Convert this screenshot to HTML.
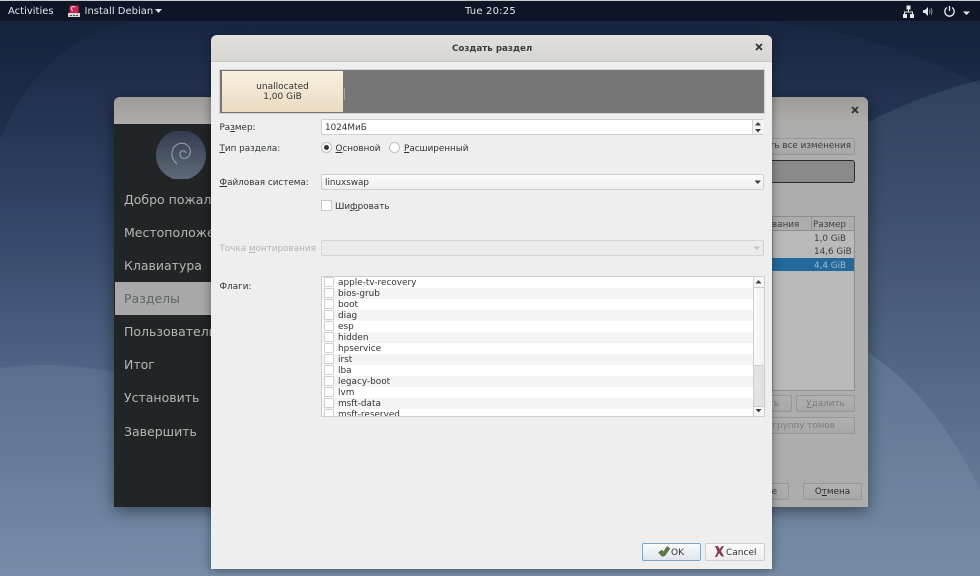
<!DOCTYPE html>
<html><head><meta charset="utf-8">
<style>
html,body{margin:0;padding:0;width:980px;height:576px;overflow:hidden;background:#2a3c5a}
#w{position:absolute;left:0;top:0;width:980px;height:576px;overflow:hidden;filter:blur(.35px);font-family:"DejaVu Sans","Liberation Sans",sans-serif;font-size:8.8px;color:#2e3436}
.a{position:absolute}
.t{position:absolute;white-space:nowrap;line-height:12px}
u{text-decoration-thickness:1px;text-underline-offset:1px}
.btn{position:absolute;box-sizing:border-box;border:1px solid #969696;border-radius:2px;background:linear-gradient(#b0b0b0,#a8a8a8);color:#7c7c7c;text-align:center;white-space:nowrap;overflow:hidden}
.s{position:absolute;left:121px;font-size:12.5px;line-height:16px;color:#b4b6b6;white-space:nowrap;width:90px;overflow:hidden;padding-left:3px;box-sizing:border-box}
.row{position:absolute;left:322px;width:431px;height:11px;overflow:hidden}
.row i{position:absolute;left:2px;top:0;width:8px;height:8px;border:1px solid #d0d0d0;background:#fff;border-radius:1px}
.row span{position:absolute;left:16px;top:0;line-height:12px;font-size:8.9px;color:#333}
</style></head><body><div id="w">
<svg class="a" style="left:0;top:0" width="980" height="576">
<defs>
<linearGradient id="bg" x1="0" y1="0" x2="0" y2="1"><stop offset="0" stop-color="#15223d"/><stop offset=".35" stop-color="#2f4263"/><stop offset=".7" stop-color="#566c8c"/><stop offset="1" stop-color="#7c92ad"/></linearGradient>
<linearGradient id="disc" x1="0" y1="0" x2="0" y2="1"><stop offset="0" stop-color="#323c4e"/><stop offset="1" stop-color="#5f6a7b"/></linearGradient>
</defs>
<rect width="980" height="576" fill="url(#bg)"/>
<path d="M0 140C30 65 80 32 130 22L0 22Z" fill="#101b33" opacity=".28"/>
<path d="M770 22C860 30 930 60 980 85L980 22Z" fill="#101b33" opacity=".28"/>
<path d="M772 190C860 110 945 90 980 80V576H772Z" fill="#5a6c85" opacity=".3"/>
<path d="M772 320C900 330 960 450 980 490V576H772Z" fill="#8098b3" opacity=".3"/>
<path d="M0 368C60 360 110 366 211 400V576H0Z" fill="#6d84a0" opacity=".35"/>
</svg>

<!-- top bar -->
<div class="a" style="left:0;top:0;width:980px;height:21px;background:#0d1526;border-top:1px solid #c9c9c9;box-sizing:border-box"></div>
<div class="t" style="left:8px;top:6px;color:#e4e7ea;font-size:10px">Activities</div>
<svg class="a" style="left:68px;top:5px" width="13" height="13"><rect x="1.500" y="0.500" width="9" height="8" fill="#c6264f"/><path d="M7 2.500a2 2 0 1 0-2 3" stroke="#f2d0d8" fill="none"/><rect x="0" y="8" width="12" height="4" fill="#d8d8d8"/><rect x="2" y="10" width="2" height="1" fill="#444"/><rect x="5" y="10" width="2" height="1" fill="#444"/><rect x="8" y="10" width="2" height="1" fill="#444"/></svg>
<div class="t" style="left:84.500px;top:6px;color:#e4e7ea;font-size:10px">Install Debian</div>
<svg class="a" style="left:155px;top:9px" width="8" height="5"><path d="M0 0H7L3.500 4Z" fill="#dfe2e6"/></svg>
<div class="t" style="left:465px;top:6px;color:#e4e7ea;font-size:10px;letter-spacing:.2px">Tue 20:25</div>
<svg class="a" style="left:900px;top:3px" width="80" height="18">
<g fill="#e6e8ea"><rect x="6.500" y="2.500" width="4" height="4"/><rect x="3" y="11" width="4" height="4"/><rect x="10" y="11" width="4" height="4"/><path d="M8 6.500h1v2h4v3h-1v-2H5v2H4v-3h4Z"/>
<path d="M23 7h2l3-3v9l-3-3h-2Z"/></g>
<path d="M29.500 6.500q1 2 0 4M31 5q2 3.500 0 7" stroke="#8b919a" fill="none"/>
<path d="M47 4.500a4.700 4.700 0 1 0 5 0M49.500 3v5" stroke="#e6e8ea" stroke-width="1.300" fill="none"/>
<path d="M63 8.500H70L66.500 12Z" fill="#e6e8ea"/>
</svg>

<!-- back window -->
<div class="a" style="left:114px;top:97px;width:754px;height:410px;border-radius:6px 6px 0 0;background:#adadad;box-shadow:0 4px 16px rgba(0,0,0,.45);overflow:hidden">
 <div class="a" style="left:0;top:0;width:754px;height:27px;background:linear-gradient(#9e9c98,#b0aeaa)"></div>
 <div class="a" style="left:0;top:27px;width:97px;height:383px;background:#212526"></div>
</div>
<svg class="a" style="left:155px;top:131px" width="52" height="48"><circle cx="26" cy="24" r="25" fill="url(#disc)"/><path d="M22 33C15 27 15 17 23 13 31 10 37 17 35 23 33 29 25 29 25 23 25 19 30 19 31 22" stroke="#8e99a8" stroke-width="1.200" fill="none"/></svg>
<div class="s" style="top:192px">Добро пожаловать</div>
<div class="s" style="top:225px">Местоположение</div>
<div class="s" style="top:258px">Клавиатура</div>
<div class="a" style="left:115px;top:282px;width:96px;height:33px;background:#a9a9a9"></div>
<div class="s" style="top:291px;color:#5d6566">Разделы</div>
<div class="s" style="top:324px">Пользователи</div>
<div class="s" style="top:357px">Итог</div>
<div class="s" style="top:390px">Установить</div>
<div class="s" style="top:424px">Завершить</div>
<svg class="a" style="left:851px;top:106px" width="9" height="9"><path d="M1 1L7 7M7 1L1 7" stroke="#2e3030" stroke-width="1.700"/></svg>
<div class="btn" style="left:740px;top:138px;width:115px;height:17px;line-height:15px;color:#3a3d3d;text-align:right;padding-right:3px;font-size:8.800px">ть все изменения</div>
<div class="a" style="left:740px;top:160px;width:115px;height:23px;box-sizing:border-box;background:#8a8a8a;border:1px solid #2c2c2c;border-radius:3px"></div>
<div class="a" style="left:772px;top:216px;width:83px;height:175px;box-sizing:border-box;border:1px solid #8d8d8d;background:#b9b9b9"></div>
<div class="a" style="left:772px;top:216px;width:83px;height:15px;box-sizing:border-box;border:1px solid #8d8d8d;background:#adadad"></div>
<div class="a" style="left:811px;top:217px;width:1px;height:13px;background:#909090"></div>
<div class="t" style="left:772px;top:219px;color:#3c3f3f">вания</div>
<div class="t" style="left:813px;top:219px;color:#3c3f3f">Размер</div>
<div class="t" style="left:814px;top:233px;color:#3c3f3f">1,0 GiB</div>
<div class="t" style="left:814px;top:246px;color:#3c3f3f">14,6 GiB</div>
<div class="a" style="left:772px;top:258px;width:82px;height:13px;background:#24699c"></div>
<div class="t" style="left:814px;top:260px;color:#9fb9cc">4,4 GiB</div>
<div class="btn" style="left:740px;top:395px;width:52px;height:17px;line-height:16px;text-align:right;padding-right:12px">ть</div>
<div class="btn" style="left:796px;top:395px;width:59px;height:17px;line-height:16px"><u>У</u>далить</div>
<div class="btn" style="left:740px;top:417px;width:115px;height:17px;line-height:16px;text-align:right;padding-right:19px">группу томов</div>
<div class="btn" style="left:740px;top:483px;width:49px;height:17px;line-height:16px;text-align:right;padding-right:11px;color:#3a3d3d">е</div>
<div class="btn" style="left:803px;top:483px;width:59px;height:17px;line-height:16px;color:#2a2d2d">О<u>т</u>мена</div>

<!-- dialog -->
<div class="a" style="left:211px;top:35px;width:561px;height:534px;background:#eeeeee;border-radius:6px 6px 0 0;box-shadow:0 2px 10px rgba(0,0,0,.4);overflow:hidden">
 <div class="a" style="left:0;top:0;width:561px;height:27px;background:linear-gradient(#e2e0dd,#d8d6d2);border-bottom:1px solid #c6c4c0;box-sizing:border-box"></div>
</div>
<div class="t" style="left:452px;top:42.500px;font-weight:bold;font-size:8.700px;color:#3a3d3d">Создать раздел</div>
<svg class="a" style="left:755px;top:43px" width="9" height="9"><path d="M1 1L7 7M7 1L1 7" stroke="#2e3030" stroke-width="1.700"/></svg>

<div class="a" style="left:220px;top:70px;width:544px;height:43px;background:#767676;box-shadow:0 0 0 1px #d2d2d2"></div>
<div class="a" style="left:222px;top:71px;width:121px;height:41px;background:linear-gradient(#f8efdf,#eadcc2)"></div>
<div class="a" style="left:344px;top:88px;width:1px;height:12px;background:#a0a0a0"></div>
<div class="t" style="left:222px;top:82px;width:121px;text-align:center;color:#333;font-size:9px;line-height:10px">unallocated<br>1,00 GiB</div>

<div class="t" style="left:219.500px;top:122px">Ра<u>з</u>мер:</div>
<div class="a" style="left:321px;top:119px;width:443px;height:16px;box-sizing:border-box;border:1px solid #cfcfcf;border-radius:2px;background:#fff"></div>
<div class="a" style="left:752px;top:120px;width:11px;height:14px;background:#f4f4f4;border-left:1px solid #cfcfcf"></div>
<svg class="a" style="left:754px;top:121px" width="9" height="13"><path d="M1 4.500H7L4 1ZM1 8H7L4 11.500Z" fill="#3a3d3d"/></svg>
<div class="t" style="left:325px;top:122px">1024МиБ</div>

<div class="t" style="left:219.500px;top:143px"><u>Т</u>ип раздела:</div>
<div class="a" style="left:321px;top:142px;width:9px;height:9px;border:1px solid #c0c0c0;border-radius:50%;background:#fff"></div>
<div class="a" style="left:324px;top:145px;width:5px;height:5px;border-radius:50%;background:#333"></div>
<div class="t" style="left:335.500px;top:143px"><u>О</u>сновной</div>
<div class="a" style="left:389px;top:142px;width:9px;height:9px;border:1px solid #c0c0c0;border-radius:50%;background:#fff"></div>
<div class="t" style="left:404px;top:143px"><u>Р</u>асширенный</div>

<div class="t" style="left:219.500px;top:177px"><u>Ф</u>айловая система:</div>
<div class="a" style="left:321px;top:174px;width:443px;height:16px;box-sizing:border-box;border:1px solid #cfcfcf;border-radius:2px;background:linear-gradient(#fbfbfb,#efefef)"></div>
<div class="t" style="left:325px;top:177px">linuxswap</div>
<svg class="a" style="left:754px;top:180px" width="8" height="5"><path d="M0.500 0.500H7L3.700 4Z" fill="#3a3d3d"/></svg>

<div class="a" style="left:321px;top:200px;width:9px;height:9px;border:1px solid #c8c8c8;background:#fff;border-radius:1px"></div>
<div class="t" style="left:335px;top:201px">Ши<u>ф</u>ровать</div>

<div class="t" style="left:219.500px;top:243px;color:#b4b4b4">Точка <u>м</u>онтирования</div>
<div class="a" style="left:321px;top:240px;width:443px;height:16px;box-sizing:border-box;border:1px solid #d4d4d4;border-radius:2px;background:#ebebeb"></div>
<svg class="a" style="left:753px;top:246px" width="8" height="5"><path d="M0.500 0.500H7L3.700 4Z" fill="#c4c4c4"/></svg>

<div class="t" style="left:219.500px;top:281px">Флаги:</div>
<div class="a" style="left:321px;top:276px;width:444px;height:141px;box-sizing:border-box;border:1px solid #cfcfcf;background:#fff;overflow:hidden">
 <div class="a" style="left:0;top:0;width:431px;height:140px;background:repeating-linear-gradient(#fff 0,#fff 11px,#f4f4f4 11px,#f4f4f4 22px)"></div>
</div>
<div class="row" style="top:277px"><i></i><span>apple-tv-recovery</span></div>
<div class="row" style="top:288px"><i></i><span>bios-grub</span></div>
<div class="row" style="top:299px"><i></i><span>boot</span></div>
<div class="row" style="top:310px"><i></i><span>diag</span></div>
<div class="row" style="top:321px"><i></i><span>esp</span></div>
<div class="row" style="top:332px"><i></i><span>hidden</span></div>
<div class="row" style="top:343px"><i></i><span>hpservice</span></div>
<div class="row" style="top:354px"><i></i><span>irst</span></div>
<div class="row" style="top:365px"><i></i><span>lba</span></div>
<div class="row" style="top:376px"><i></i><span>legacy-boot</span></div>
<div class="row" style="top:387px"><i></i><span>lvm</span></div>
<div class="row" style="top:398px"><i></i><span>msft-data</span></div>
<div class="row" style="top:409px;height:7px"><i></i><span>msft-reserved</span></div>

<div class="a" style="left:753px;top:277px;width:11px;height:139px;background:#e2e2e2;border-left:1px solid #cfcfcf;box-sizing:border-box"></div>
<div class="a" style="left:754px;top:287px;width:10px;height:79px;background:linear-gradient(90deg,#fbfbfb,#f0f0f0);border-bottom:1px solid #cfcfcf;box-sizing:border-box"></div>
<div class="a" style="left:754px;top:277px;width:10px;height:11px;background:#f6f6f6;border-bottom:1px solid #cfcfcf;box-sizing:border-box"></div>
<div class="a" style="left:754px;top:406px;width:10px;height:10px;background:#f6f6f6;border-top:1px solid #cfcfcf;box-sizing:border-box"></div>
<svg class="a" style="left:755px;top:279px" width="8" height="6"><path d="M0.500 4.500H6.500L3.500 1Z" fill="#3a3d3d"/></svg>
<svg class="a" style="left:755px;top:408px" width="8" height="6"><path d="M0.500 1H6.500L3.500 4.500Z" fill="#3a3d3d"/></svg>

<div class="a" style="left:642px;top:543px;width:59px;height:18px;box-sizing:border-box;border:1px solid #7fa6c4;border-radius:2px;background:linear-gradient(#fbfcfd,#dfe6ec)"></div>
<svg class="a" style="left:658px;top:545px" width="13" height="13"><path d="M0.500 7.500L4 5 5.500 7 9 1.500 12 3.500 7 10.500 4 11.500Z" fill="#5d7a45" stroke="#48603a" stroke-width=".5"/></svg>
<div class="t" style="left:671px;top:547px;color:#333;font-size:9px">OK</div>
<div class="a" style="left:705px;top:543px;width:60px;height:18px;box-sizing:border-box;border:1px solid #cfcfcf;border-radius:2px;background:linear-gradient(#fbfbfb,#ededed)"></div>
<svg class="a" style="left:714px;top:545px" width="11" height="13"><path d="M1 1L4 1 5.500 4 8 1H10L7 6 10 11.500H7.500L5 8 3 12H1L3.500 6.500Z" fill="#8a3a4c"/></svg>
<div class="t" style="left:726px;top:547px;color:#333;font-size:9px">Cancel</div>
</div></body></html>
